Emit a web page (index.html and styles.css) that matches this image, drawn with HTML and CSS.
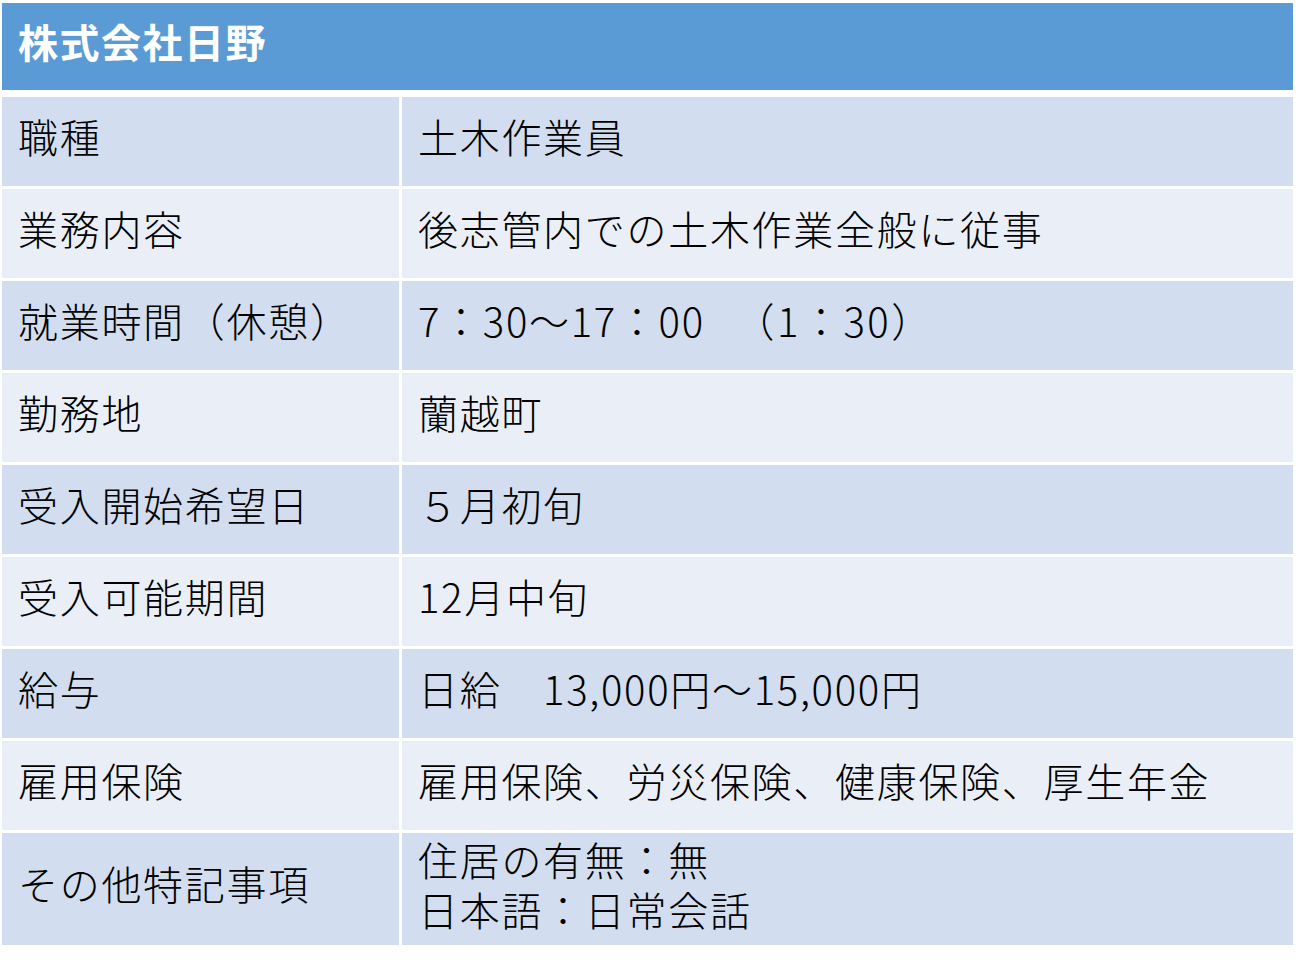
FILE: index.html
```html
<!DOCTYPE html>
<html lang="ja">
<head>
<meta charset="utf-8">
<title>株式会社日野</title>
<link rel="stylesheet" href="styles.css">
</head>
<body>
<div class="sheet">
  <div class="header">株式会社日野</div>
  <div class="rows">
    <div class="row dark"><div class="label">職種</div><div class="value">土木作業員</div></div>
    <div class="row light"><div class="label">業務内容</div><div class="value">後志管内での土木作業全般に従事</div></div>
    <div class="row dark"><div class="label">就業時間（休憩）</div><div class="value">7：30～17：00　<span class="paren">（1：30）</span></div></div>
    <div class="row light"><div class="label">勤務地</div><div class="value">蘭越町</div></div>
    <div class="row dark"><div class="label">受入開始希望日</div><div class="value">５月初旬</div></div>
    <div class="row light"><div class="label">受入可能期間</div><div class="value">12月中旬</div></div>
    <div class="row dark"><div class="label">給与</div><div class="value">日給　13,000円～15,000円</div></div>
    <div class="row light"><div class="label">雇用保険</div><div class="value">雇用保険、労災保険、健康保険、厚生年金</div></div>
    <div class="row dark tall"><div class="label">その他特記事項</div><div class="value multi"><span>住居の有無：無</span><span>日本語：日常会話</span></div></div>
  </div>
</div>
</body>
</html>
```

FILE: styles.css
```css
html, body {
  margin: 0;
  padding: 0;
  background: #ffffff;
}
body {
  font-family: "Noto Sans CJK JP", "Noto Sans", sans-serif;
  color: #000;
}
.sheet {
  width: 1291px;
  margin: 3px 0 0 2px;
}
.header {
  height: 87px;
  background: #5b9bd5;
  color: #fff;
  font-weight: 700;
  font-size: 40px;
  line-height: 76px;
  padding-left: 16px;
  letter-spacing: 1.5px;
  box-sizing: border-box;
}
.rows {
  margin-top: 7px;
  display: flex;
  flex-direction: column;
  gap: 3px;
}
.row {
  display: grid;
  grid-template-columns: 397px 1fr;
  column-gap: 3px;
  height: 89px;
}
.row.tall {
  height: 112px;
}
.row.dark .label, .row.dark .value { background: #d2deef; }
.row.light .label, .row.light .value { background: #eaeff7; }
.label, .value {
  display: flex;
  align-items: center;
  padding-left: 16px;
  padding-bottom: 12px;
  font-size: 40px;
  font-weight: 300;
  letter-spacing: 1.7px;
  white-space: nowrap;
  box-sizing: border-box;
}
.paren {
  margin-left: -12px;
  letter-spacing: 2.5px;
}
.value.multi {
  flex-direction: column;
  align-items: flex-start;
  justify-content: center;
  line-height: 50px;
  padding-bottom: 10px;
}
```
